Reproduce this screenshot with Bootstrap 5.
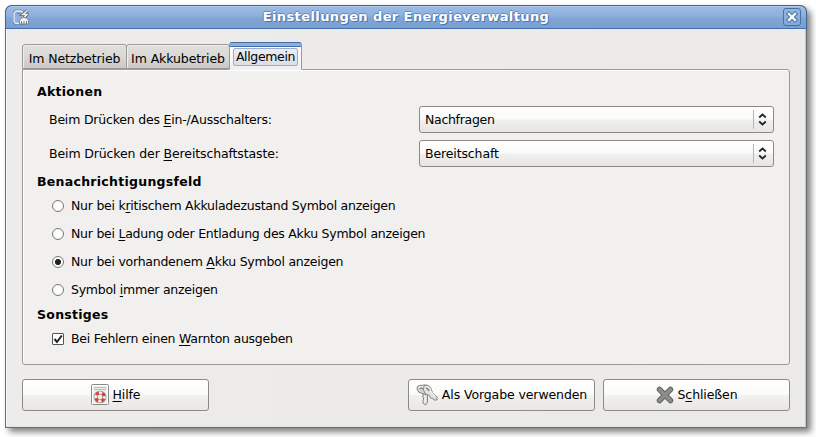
<!DOCTYPE html>
<html lang="de">
<head>
<meta charset="utf-8">
<title>Einstellungen der Energieverwaltung</title>
<link href="https://cdn.jsdelivr.net/npm/bootstrap@5.3.0/dist/css/bootstrap.min.css" rel="stylesheet">
<style>
body{font:12.5px/16px "DejaVu Sans",sans-serif;letter-spacing:-.25px;color:#000;background:#fff;overflow:hidden;height:437px;padding:5px 0 0 5px}
.win{width:802px;height:423px;background:linear-gradient(90deg,#edecea,#ebeae8);border:1px solid #6f6f6f;border-top:0;border-radius:7px 7px 0 0;box-shadow:inset 1px -1px #fff8,inset -1px -1px #c4c3c0,4px 4px 6px rgba(0,0,0,.5)}
.titlebar{height:24px;margin:0 -1px;padding:0 5px 0 7px;border:1px solid #47658f;border-bottom-color:#4070ae;border-radius:7px 7px 0 0;background:linear-gradient(#9dbce6,#8fb0dd 45%,#80a5d6 55%,#799fd1);box-shadow:inset 0 1px #adc8ec}
.titlebar h1{font-size:13px;line-height:22px;letter-spacing:.4px;font-weight:700;color:#fff;margin:0;text-shadow:1px 1px #4a75ae,-1px 0 #6389bf,0 -1px #6389bf}
.close-box{width:18px;height:18px;border:1px solid #47709f;border-radius:3px;padding:0;background:linear-gradient(#93b4e0,#84a8d9);line-height:0}
.content{padding:13px 16px 0}
.nav-tabs{border:0;height:27px;position:relative;z-index:1}
.nav-tabs .nav-link{height:25px;margin:0 -1px 0 0;border:1px solid #9b9a97;border-radius:3px 3px 0 0;padding:5px 0 0;text-align:center;letter-spacing:-.1px;color:#000;background:linear-gradient(#e0dfdd,#dad9d6 50%,#c9c8c5);box-shadow:inset 1px 1px #efeeec;line-height:17px}
.nav-tabs .nav-link:hover{color:#000}
.nav-tabs .nav-link.active{height:28px;margin-bottom:-1px;padding:0 3px;border-color:#466fa8 #9b9a97 #f1f0ee;letter-spacing:-.35px;color:#000;background:linear-gradient(#8eb0df 3px,#466fa8 3px,#466fa8 4px,#fff 4px,#f1f0ee);box-shadow:none}
.t1{width:105px}.t2{width:104px}.t3{width:73px}
.focus-box{display:block;height:18px;margin-top:5px;border:1px solid #9aaecb;border-radius:2px;line-height:16px;background:linear-gradient(#eaedf3,#d9dee8)}
.sheet{height:296px;border:1px solid #9b9a97;border-radius:0 3px 3px 3px;background:#f1f0ee;box-shadow:inset 1px 1px #fff;padding:14px 15px 0 14px}
.sheet h2{font-size:12.5px;line-height:16px;letter-spacing:.28px;font-weight:700;margin:0 0 6px}
.sheet .h-opt{margin:7px 0 8px}
.sheet .h-last{margin:0 0 8px}
.pick{width:355px;height:27px;border:1px solid #8b8a87;border-radius:3px;padding:0 6px 0 5px;color:#000;font-size:12.5px;line-height:25px;letter-spacing:-.3px;background:linear-gradient(#fff,#fafaf9 48%,#f1f0ef 52%,#e6e5e3)}
.pick i{width:1px;height:19px;background:#b7b6b3;margin-left:auto;margin-right:4px}
.form-row{padding-left:12px;height:27px;letter-spacing:-.2px;margin-bottom:7px}
.wide{letter-spacing:-.12px}
.opt{position:relative;min-height:28px;padding:0 0 0 34px;margin:0}
.opt-end{min-height:25px}
.opt .form-check-input{width:12px;height:12px;margin:2px 0 0 -19px;border:1px solid #777673;background-color:#fff;box-shadow:none}
.opt .form-check-input[type=radio]:checked{background-image:radial-gradient(circle,#222 2.7px,transparent 3.4px)}
.opt .form-check-input[type=checkbox]{border-radius:1px;background-image:none;border-color:#555}
.tick{position:absolute;left:15px;top:2px}
.opt label{display:block}
.foot{margin-top:14px}
.act{width:187px;height:32px;border:1px solid #8b8a87;border-radius:3px;padding:0;color:#000;font-size:12.5px;line-height:30px;letter-spacing:-.1px;background:linear-gradient(#fff,#fbfbfa 48%,#f2f1f0 52%,#e8e7e5)}
u{text-decoration-thickness:1px;text-underline-offset:2px}
</style>
<script src="https://cdn.jsdelivr.net/npm/bootstrap@5.3.0/dist/js/bootstrap.bundle.min.js"></script>
</head>
<body>
<main class="win">
<header class="titlebar d-flex align-items-center">
<svg width="16" height="16" viewBox="0 0 16 16" fill="none"><rect x="1" y="2" width="9" height="12.500" rx="2.500" fill="#8eb1df" stroke="#4a688f" stroke-width="2.600"/><rect x="1" y="2" width="9" height="12.500" rx="2.500" fill="#8eb1df" stroke="#eeeeea" stroke-width="1.300"/><path d="M3.500 4.500h4" stroke="#5e84b8"/><path d="M14.500 1.500l-4.500 4h4L10.500 9" stroke="#59666f" stroke-width="3.200"/><path d="M14.500 1.500l-4.500 4h4L10.500 9" stroke="#eeeeea" stroke-width="1.600"/><path d="M6.500 15v-3.500Q7 8.500 11 8.500t4.500 3V15z" fill="#f3f3ef" stroke="#5d6b78" stroke-width=".7"/><path d="M8.500 15v-3M11 15v-3M13.500 15v-3" stroke="#686e70" stroke-width=".9"/></svg>
<h1 class="flex-grow-1 text-center">Einstellungen der Energieverwaltung</h1>
<button class="close-box" aria-label="Schließen"><svg width="16" height="16" viewBox="0 0 16 16" stroke-linecap="square"><path d="M5 5l6 6M11 5l-6 6" stroke="#47709f" stroke-width="4.400"/><path d="M5 5l6 6M11 5l-6 6" stroke="#fff" stroke-width="2.300"/></svg></button>
</header>
<div class="content">
<nav class="nav nav-tabs align-items-end flex-nowrap">
<a class="nav-link t1">Im Netzbetrieb</a><a class="nav-link t2">Im Akkubetrieb</a><a class="nav-link active t3"><span class="focus-box">Allgemein</span></a>
</nav>
<section class="sheet">
<h2>Aktionen</h2>
<div class="form-row d-flex align-items-center justify-content-between"><span>Beim Drücken des <u>E</u>in-/Ausschalters:</span>
<button class="pick d-flex align-items-center">Nachfragen<i></i><svg width="9" height="13" viewBox="0 0 9 13" fill="none" stroke="#222" stroke-width="1.700"><path d="M1.200 4.500L4.500 1.500l3.300 3M1.200 8.500l3.300 3 3.300-3"/></svg></button></div>
<div class="form-row d-flex align-items-center justify-content-between"><span class="wide">Beim Drücken der <u>B</u>ereitschaftstaste:</span>
<button class="pick wide d-flex align-items-center">Bereitschaft<i></i><svg width="9" height="13" viewBox="0 0 9 13" fill="none" stroke="#222" stroke-width="1.700"><path d="M1.200 4.500L4.500 1.500l3.300 3M1.200 8.500l3.300 3 3.300-3"/></svg></button></div>
<h2 class="h-opt">Benachrichtigungsfeld</h2>
<div class="form-check opt"><input class="form-check-input" type="radio" name="sym" id="r1"><label for="r1">Nur bei k<u>r</u>itischem Akkuladezustand Symbol anzeigen</label></div>
<div class="form-check opt"><input class="form-check-input" type="radio" name="sym" id="r2"><label for="r2">Nur bei <u>L</u>adung oder Entladung des Akku Symbol anzeigen</label></div>
<div class="form-check opt"><input class="form-check-input" type="radio" name="sym" id="r3" checked><label for="r3">Nur bei vorhandenem <u>A</u>kku Symbol anzeigen</label></div>
<div class="form-check opt opt-end"><input class="form-check-input" type="radio" name="sym" id="r4"><label for="r4">Symbol <u>i</u>mmer anzeigen</label></div>
<h2 class="h-last">Sonstiges</h2>
<div class="form-check opt"><input class="form-check-input" type="checkbox" id="c1" checked><svg class="tick" width="12" height="12" viewBox="0 0 12 12" fill="none"><path d="M2.500 6l2.500 3L9.800 2.500" stroke="#222" stroke-width="2"/></svg><label for="c1">Bei Fehlern einen <u>W</u>arnton ausgeben</label></div>
</section>
<footer class="d-flex gap-2 foot">
<button class="act me-auto d-flex align-items-center justify-content-center"><svg width="18" height="22" viewBox="0 0 18 22" fill="none"><rect x=".5" y=".5" width="17" height="20" rx="1" fill="#eeefed" stroke="#888a85"/><path d="M1.500 1.500h15v18h-15z" stroke="#fff"/><path d="M3 3.500h12M3 5.500h12" stroke="#babdb6"/><circle cx="9" cy="13" r="4.300" stroke="#777" stroke-width="4"/><circle cx="9" cy="13" r="4.300" stroke="#f3efee" stroke-width="3"/><circle cx="9" cy="13" r="4.300" stroke="#df3c36" stroke-width="3" stroke-dasharray="3.377" stroke-dashoffset="-1.690"/></svg><span class="ms-1"><u>H</u>ilfe</span></button>
<button class="act d-flex align-items-center justify-content-center"><svg width="22" height="22" viewBox="0 0 22 22" fill="none" stroke-linejoin="round"><path d="M7 9h4.500v9.500L9.500 21 7 19V16l1-1-1-1z" fill="#dcddd9" stroke="#858782"/><path d="M1 5Q.5 1.500 4 1.500l5-.5Q14 1 14.500 5.500q0 4-4 5L6 9.500Q2 9 1 5z" fill="#d3d4d0" stroke="#858782"/><path d="M8 1.500q5-1 7 3l1.500 4 4.500 4.500v3h-3l-1-1.500-2.500-.500-1-2.500L9.500 10Q6 6 8 1.500z" fill="#e2e3df" stroke="#858782"/><path d="M3.500 4.500q1.500-1 3.500 0M10 4q2 0 3 3" stroke="#858782" stroke-width="1.600"/><path d="M2.500 3.500Q5 2 7.500 3M10 2.500q4 0 5 5l4.500 5M9 12v7" stroke="#fff"/></svg><span class="ms-1">Als Vorgabe verwenden</span></button>
<button class="act d-flex align-items-center justify-content-center"><svg class="me-1" width="18" height="18" viewBox="0 0 18 18" stroke-linecap="round"><path d="M3.500 3.500l11 11M14.500 3.500l-11 11" stroke="#62645f" stroke-width="5.500"/><path d="M3.500 3.500l11 11M14.500 3.500l-11 11" stroke="#8b8d88" stroke-width="3.700"/></svg><span>S<u>c</u>hließen</span></button>
</footer>
</div>
</main>
</body>
</html>
